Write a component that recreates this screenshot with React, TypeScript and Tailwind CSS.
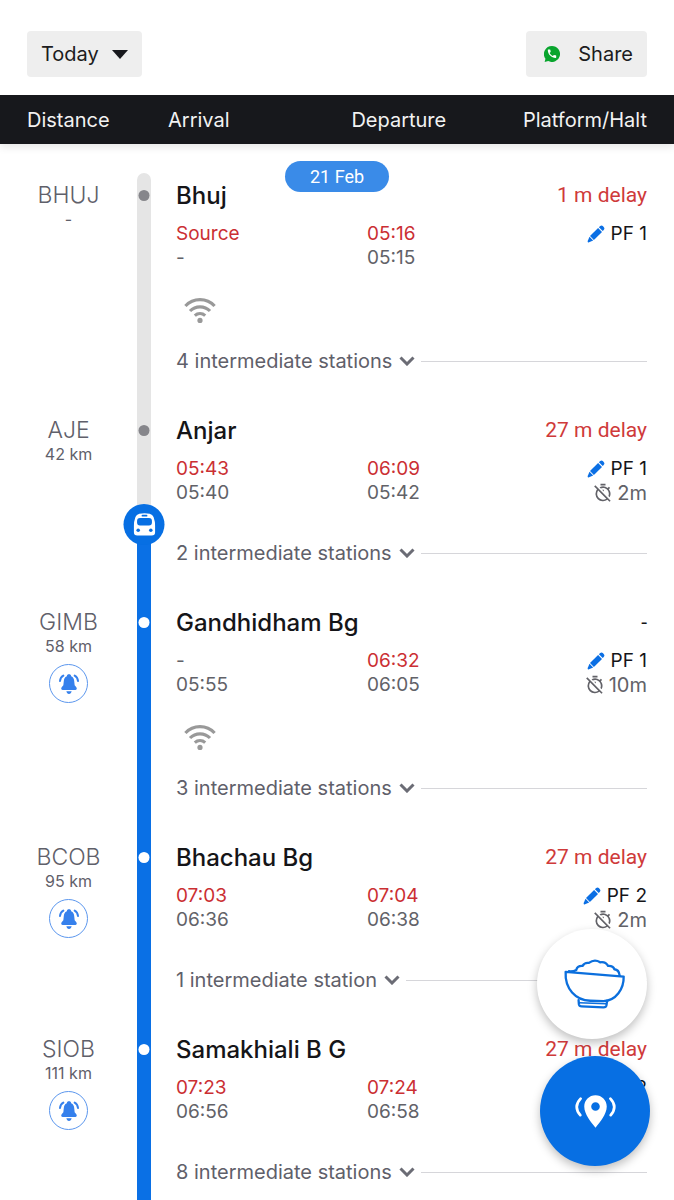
import React from "react";
import { MdOutlineTimerOff } from "react-icons/md";

type Station = {
  code: string;
  km: string;
  name: string;
  delay: string;
  late: boolean;
  arrival: string;
  arrivalLate: boolean;
  scheduledArrival: string;
  departure: string;
  scheduledDeparture: string;
  platform: string;
  halt?: string;
  wifi?: boolean;
  alarm?: boolean;
  between: string;
  rail: "passed" | "current" | "ahead";
};

const stations: Station[] = [
  { code: "BHUJ", km: "-", name: "Bhuj", delay: "1 m delay", late: true, arrival: "Source", arrivalLate: true, scheduledArrival: "-", departure: "05:16", scheduledDeparture: "05:15", platform: "PF 1", wifi: true, between: "4 intermediate stations", rail: "passed" },
  { code: "AJE", km: "42 km", name: "Anjar", delay: "27 m delay", late: true, arrival: "05:43", arrivalLate: true, scheduledArrival: "05:40", departure: "06:09", scheduledDeparture: "05:42", platform: "PF 1", halt: "2m", between: "2 intermediate stations", rail: "current" },
  { code: "GIMB", km: "58 km", name: "Gandhidham Bg", delay: "-", late: false, arrival: "-", arrivalLate: false, scheduledArrival: "05:55", departure: "06:32", scheduledDeparture: "06:05", platform: "PF 1", halt: "10m", wifi: true, alarm: true, between: "3 intermediate stations", rail: "ahead" },
  { code: "BCOB", km: "95 km", name: "Bhachau Bg", delay: "27 m delay", late: true, arrival: "07:03", arrivalLate: true, scheduledArrival: "06:36", departure: "07:04", scheduledDeparture: "06:38", platform: "PF 2", halt: "2m", alarm: true, between: "1 intermediate station", rail: "ahead" },
  { code: "SIOB", km: "111 km", name: "Samakhiali B G", delay: "27 m delay", late: true, arrival: "07:23", arrivalLate: true, scheduledArrival: "06:56", departure: "07:24", scheduledDeparture: "06:58", platform: "PF 2", halt: "2m", alarm: true, between: "8 intermediate stations", rail: "ahead" },
];

const WhatsAppIcon = () => (
  <svg viewBox="0 0 24 24" className="size-4" aria-hidden="true">
    <path fill="#09a52e" d="M12 0a12 12 0 1 1-5.6 22.6L1 24l1.2-5A12 12 0 0 1 12 0z" />
    <path fill="#fff" transform="translate(3.6 3.2) scale(.7)" d="M20.01 15.38c-1.23 0-2.42-.2-3.53-.56-.35-.12-.74-.03-1.01.24l-1.57 1.97c-2.83-1.35-5.48-3.9-6.89-6.83l1.95-1.66c.27-.28.35-.67.24-1.02-.37-1.11-.56-2.3-.56-3.53 0-.54-.45-.99-.99-.99H4.19C3.65 3 3 3.24 3 3.99 3 13.28 10.73 21 20.01 21c.71 0 .99-.63.99-1.18v-3.45c0-.54-.45-.99-.99-.99z" />
  </svg>
);

const WifiIcon = () => (
  <svg viewBox="0 0 32 26" className="h-[26px] w-8" fill="none" stroke="#999" strokeWidth="3.2" aria-label="Wi-Fi available" role="img">
    <path d="M1.4 8A20 20 0 0 1 30.6 8" />
    <path d="M6 13A14 14 0 0 1 26 13" />
    <path d="M10.8 17.6A8 8 0 0 1 21.2 17.6" />
    <circle cx="16" cy="22.4" r="2.6" fill="#999" stroke="none" />
  </svg>
);

const PencilIcon = () => (
  <svg viewBox="0 0 18 18" className="size-[18px]" fill="#0b6fe4" aria-hidden="true">
    <path d="M3 11.1 11.1 3 15 6.900 6.900 15z" />
    <path d="M2.500 11.800 6.200 15.500 2 17.300Q.3 18 .7 16z" />
    <path d="M11.900 2.300 13.200 1.100Q14.600 0 15.800 1.100L16.900 2.200Q18 3.400 16.900 4.800L15.700 6.100z" />
  </svg>
);

const BellIcon = () => (
  <svg viewBox="0 0 60 60" className="size-5" aria-hidden="true">
    <path fill="#3580ec" d="M30 1c4 0 6 2 6.500 5.500C43 9 45 15 45.500 20L47 34l5 6c3 4 1 8-3 8H11c-4 0-6-4-3-8l5-6 1.500-14C15 15 17 9 23.500 6.500 24 3 26 1 30 1zM22 52h16c-1 5-4 8-8 8s-7-3-8-8z" />
    <path fill="none" stroke="#3580ec" strokeWidth="6" strokeLinecap="round" d="M13 5Q4 10 3 21M47 5Q56 10 57 21" />
  </svg>
);

const TrainIcon = () => (
  <svg viewBox="0 0 68 70" className="h-[23px] w-[22px]" aria-hidden="true">
    <path fill="#fff" d="M18 2Q34-2 50 2 59 4 62 12 67 26 67 40V58Q67 69 56 69H12Q1 69 1 58V40Q1 26 6 12 9 4 18 2z" />
    <rect x="25" y="5" width="18" height="5.500" rx="2.700" fill="#076fe3" />
    <rect x="11" y="15" width="46" height="23" rx="9" fill="#076fe3" />
    <circle cx="14.500" cy="53" r="5.500" fill="#076fe3" />
    <circle cx="53.500" cy="53" r="5.500" fill="#076fe3" />
  </svg>
);

const BowlIcon = () => (
  <svg viewBox="0 0 190 155" className="h-[52px] w-[63px]" fill="none" stroke="#0b6fdd" strokeWidth="7" strokeLinejoin="round" strokeLinecap="round" aria-hidden="true">
    <path d="M8 41 183 55C184 92 160 128 122 129L82 128C38 126 5 92 8 41z" />
    <path d="M47 126 48 139Q49 145 56 145L122 148Q130 148 131 142L133 128" />
    <path d="M49 134 130 137" strokeWidth="4" />
    <path d="M18 39Q32 40 40 35 43 22 59 23 65 12 78 14 95 1 112 12 128 9 136 23 151 22 155 33 169 34 171 53" />
  </svg>
);

const LocateIcon = () => (
  <svg viewBox="0 0 130 104" className="h-[35px] w-[43px]" aria-hidden="true">
    <path fill="#fff" fillRule="evenodd" d="M65 3C84 3 99 18 99 37 99 60 78 85 65 101 52 85 31 60 31 37 31 18 46 3 65 3zm0 21a13 13 0 1 0 0 26 13 13 0 0 0 0-26z" />
    <path fill="none" stroke="#fff" strokeWidth="8" strokeLinecap="round" d="M20 13Q-3 37 19 63M110 13Q133 37 111 63" />
  </svg>
);

function Rail({ station, first }: { station: Station; first: boolean }) {
  const ahead = station.rail === "ahead";
  return (
    <div className={`relative flex w-3.5 flex-col ${first ? "overflow-hidden rounded-t-full" : ""}`}>
      {station.rail === "current" ? (
        <>
          <div className="h-[117px] bg-[#e5e5e5]" />
          <div className="flex-1 bg-[#0a70e5]" />
          <div className="absolute top-24 left-1/2 flex size-[41px] -translate-x-1/2 items-center justify-center rounded-full bg-[#076fe3]">
            <TrainIcon />
          </div>
        </>
      ) : (
        <div className={`flex-1 ${ahead ? "bg-[#0a70e5]" : "bg-[#e5e5e5]"}`} />
      )}
      <span className={`absolute top-[17px] left-1/2 size-[11px] -translate-x-1/2 rounded-full ${ahead ? "bg-white" : "bg-[#86868b]"}`} />
    </div>
  );
}

function StationRow({ station, first }: { station: Station; first: boolean }) {
  return (
    <li className="grid grid-cols-[137px_14px_minmax(0,1fr)]">
      <div className="flex flex-col items-center pt-2.5 text-[#5f606a]">
        <span className="text-[23px] leading-6 font-[350]">{station.code}</span>
        <span className="text-base leading-6">{station.km}</span>
        {station.alarm && (
          <button type="button" aria-label={`Set alarm for ${station.name}`} className="mt-1.5 flex size-[39px] items-center justify-center rounded-full border border-[#5c97ee]">
            <BellIcon />
          </button>
        )}
      </div>
      <Rail station={station} first={first} />
      <div className="pr-[27px] pb-[35px] pl-[25px]">
        <div className="flex h-[46px] items-center justify-between">
          <h2 className="text-2xl font-medium text-[#151518]">{station.name}</h2>
          <span className={`font-[Roboto] text-[21px] ${station.late ? "text-[#cf3a3a]" : "text-[#151518]"}`}>{station.delay}</span>
        </div>
        <div className="mt-[3px] grid grid-cols-[191fr_150fr_130fr] text-[19px] leading-6 text-[#626268]">
          <div>
            <p className={station.arrivalLate ? "text-[#cb2f33]" : ""}>{station.arrival}</p>
            <p>{station.scheduledArrival}</p>
          </div>
          <div>
            <p className="text-[#cb2f33]">{station.departure}</p>
            <p>{station.scheduledDeparture}</p>
          </div>
          <div className="flex flex-col items-end">
            <button type="button" aria-label={`Edit platform ${station.platform}`} className="flex items-center gap-1.5 text-[#151518]">
              <PencilIcon />
              {station.platform}
            </button>
            {station.halt && (
              <p className="flex items-center gap-1 text-xl leading-6">
                <MdOutlineTimerOff className="size-5" aria-hidden="true" />
                {station.halt}
              </p>
            )}
          </div>
        </div>
        {station.wifi && (
          <div className="pt-7 pl-2">
            <WifiIcon />
          </div>
        )}
        <button type="button" className={`flex w-full items-center text-xl leading-6 text-[#5f606a] ${station.wifi ? "mt-[25px]" : "mt-9"}`}>
          {station.between}
          <svg viewBox="0 0 16 10" className="ml-[7px] h-2.5 w-4" fill="none" stroke="#6b6c75" strokeWidth="3" aria-hidden="true">
            <path d="M1.500 1.500 8 8 14.500 1.500" />
          </svg>
          <span className="ml-1.5 h-px flex-1 bg-[#d6d6da]" />
        </button>
      </div>
    </li>
  );
}

export default function App() {
  return (
    <div className="flex h-screen flex-col bg-white font-[Inter,sans-serif]">
      <header className="relative z-10 shadow-[0_3px_8px_rgba(0,0,0,0.1)]">
        <div className="flex items-center justify-between bg-white px-[27px] pt-[31px] pb-[18px]">
          <label className="relative flex items-center">
            <select aria-label="Journey day" defaultValue="Today" className="h-[46px] w-[115px] appearance-none rounded-sm bg-[#eee] pl-3.5 text-xl text-[#1c1c20]">
              <option>Today</option>
            </select>
            <svg viewBox="0 0 16 9" className="pointer-events-none absolute right-3.5 h-[9px] w-4" aria-hidden="true">
              <path d="M0 0H16L8 9z" fill="#17181c" />
            </svg>
          </label>
          <button type="button" className="flex h-[46px] items-center gap-[18px] rounded-sm bg-[#eee] pr-3.5 pl-[18px] text-xl text-[#1c1c20]">
            <WhatsAppIcon />
            Share
          </button>
        </div>
        <div className="grid h-[49px] grid-cols-[141px_183fr_295fr] items-center bg-[#17181c] px-[27px] text-xl text-[#f2f2f2]">
          <span>Distance</span>
          <span>Arrival</span>
          <div className="flex justify-between">
            <span>Departure</span>
            <span>Platform/Halt</span>
          </div>
        </div>
      </header>

      <main className="relative min-h-0 flex-1 overflow-y-auto pt-[29px] [scrollbar-width:none]">
        <div className="absolute top-[17px] left-1/2 flex h-[31px] w-26 -translate-x-1/2 items-center justify-center rounded-full bg-[#3a8be8] font-[Roboto] text-lg text-white">
          21 Feb
        </div>
        <ul>
          {stations.map((station, i) => (
            <StationRow key={station.code} station={station} first={i === 0} />
          ))}
        </ul>
      </main>

      <div className="fixed right-6 bottom-[34px] z-20 flex flex-col items-end gap-[17px]">
        <button type="button" aria-label="Order food" className="mr-[3px] flex size-[110px] items-center justify-center rounded-full bg-white pl-1 shadow-[0_4px_10px_rgba(0,0,0,0.25)]">
          <BowlIcon />
        </button>
        <button type="button" aria-label="Locate train" className="flex size-[110px] items-center justify-center rounded-full bg-[#076fe3] shadow-[0_4px_10px_rgba(0,0,0,0.25)]">
          <LocateIcon />
        </button>
      </div>
    </div>
  );
}
